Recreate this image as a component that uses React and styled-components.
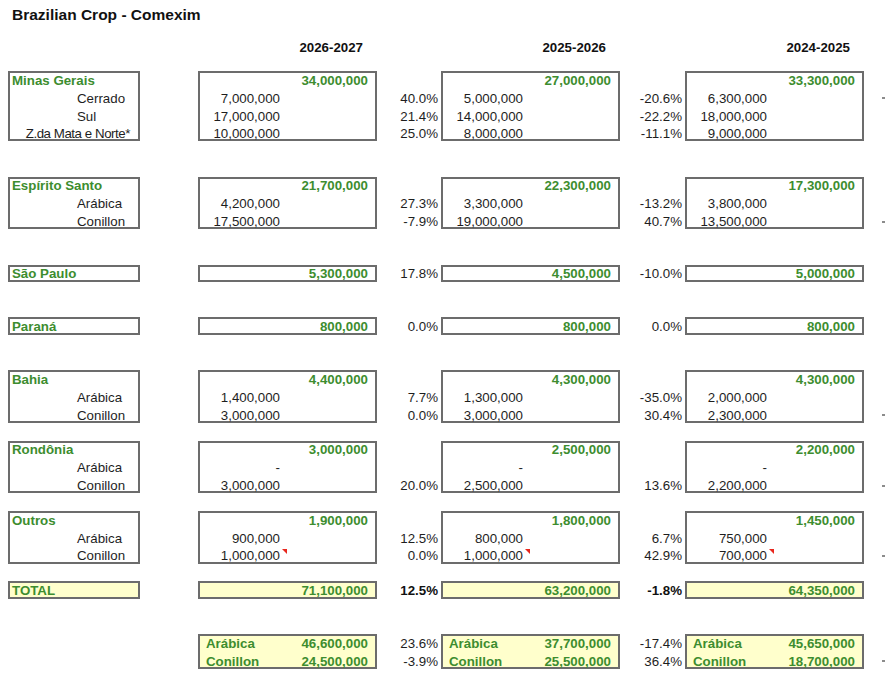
import React from "react";
import styled, { createGlobalStyle, css } from "styled-components";

const R = 17.6; // spreadsheet row height (block spacing)
const P = 17.8; // text row pitch inside a block

const GlobalStyle = createGlobalStyle`
  body {
    margin: 0;
    background: #ffffff;
    font-family: "Liberation Sans", Arial, sans-serif;
    font-size: 13.3px;
    color: #1e1e1e;
  }
`;

const blocks = [
  {
    name: "Minas Gerais",
    gap: 0,
    totals: ["34,000,000", "27,000,000", "33,300,000"],
    subs: [
      { label: "Cerrado", vals: ["7,000,000", "5,000,000", "6,300,000"], pcts: ["40.0%", "-20.6%"], dot: true },
      { label: "Sul", vals: ["17,000,000", "14,000,000", "18,000,000"], pcts: ["21.4%", "-22.2%"] },
      { label: "Z.da Mata e Norte*", wide: true, vals: ["10,000,000", "8,000,000", "9,000,000"], pcts: ["25.0%", "-11.1%"] },
    ],
  },
  {
    name: "Espírito Santo",
    gap: 2,
    totals: ["21,700,000", "22,300,000", "17,300,000"],
    subs: [
      { label: "Arábica", vals: ["4,200,000", "3,300,000", "3,800,000"], pcts: ["27.3%", "-13.2%"] },
      { label: "Conillon", vals: ["17,500,000", "19,000,000", "13,500,000"], pcts: ["-7.9%", "40.7%"], dot: true },
    ],
  },
  { name: "São Paulo", gap: 2, totals: ["5,300,000", "4,500,000", "5,000,000"], topPcts: ["17.8%", "-10.0%"], subs: [] },
  { name: "Paraná", gap: 2, totals: ["800,000", "800,000", "800,000"], topPcts: ["0.0%", "0.0%"], subs: [] },
  {
    name: "Bahia",
    gap: 2,
    totals: ["4,400,000", "4,300,000", "4,300,000"],
    subs: [
      { label: "Arábica", vals: ["1,400,000", "1,300,000", "2,000,000"], pcts: ["7.7%", "-35.0%"] },
      { label: "Conillon", vals: ["3,000,000", "3,000,000", "2,300,000"], pcts: ["0.0%", "30.4%"], dot: true },
    ],
  },
  {
    name: "Rondônia",
    gap: 1,
    totals: ["3,000,000", "2,500,000", "2,200,000"],
    subs: [
      { label: "Arábica", vals: ["-", "-", "-"], pcts: ["", ""] },
      { label: "Conillon", vals: ["3,000,000", "2,500,000", "2,200,000"], pcts: ["20.0%", "13.6%"], dot: true },
    ],
  },
  {
    name: "Outros",
    gap: 1,
    totals: ["1,900,000", "1,800,000", "1,450,000"],
    subs: [
      { label: "Arábica", vals: ["900,000", "800,000", "750,000"], pcts: ["12.5%", "6.7%"] },
      { label: "Conillon", vals: ["1,000,000", "1,000,000", "700,000"], pcts: ["0.0%", "42.9%"], dot: true, note: true },
    ],
  },
];

const total = { totals: ["71,100,000", "63,200,000", "64,350,000"], pcts: ["12.5%", "-1.8%"] };

const split = [
  { arabica: "46,600,000", conillon: "24,500,000" },
  { arabica: "37,700,000", conillon: "25,500,000" },
  { arabica: "45,650,000", conillon: "18,700,000" },
];
const splitPcts = [
  ["23.6%", "-3.9%"],
  ["-17.4%", "36.4%"],
];

export default function App() {
  return (
    <Page>
      <GlobalStyle />
      <Title>Brazilian Crop - Comexim</Title>

      <HeaderRow>
        <LabelSpacer />
        <HeadCell>2026-2027</HeadCell>
        <HeadGap $w={64} />
        <HeadCell>2025-2026</HeadCell>
        <HeadGap $w={65} />
        <HeadCell>2024-2025</HeadCell>
      </HeaderRow>

      {blocks.map((b) => {
        const rows = 1 + b.subs.length;
        return (
          <Block key={b.name} $gap={b.gap} $rows={rows}>
            <LabelBox $rows={rows}>
              <RegionName>{b.name}</RegionName>
              {b.subs.map((s) => (
                <SubLabel key={s.label} $wide={s.wide}>{s.label}</SubLabel>
              ))}
            </LabelBox>
            {[0, 1, 2].map((c) => (
              <React.Fragment key={c}>
                <ValBox $rows={rows}>
                  <TotalCell>{b.totals[c]}</TotalCell>
                  {b.subs.map((s) => (
                    <SubVal key={s.label}>
                      {s.vals[c]}
                      {s.note && <NoteMark />}
                    </SubVal>
                  ))}
                </ValBox>
                {c < 2 && (
                  <PctCol $rows={rows} $w={c === 0 ? 64 : 65}>
                    <Pct>{b.topPcts ? b.topPcts[c] : ""}</Pct>
                    {b.subs.map((s) => (
                      <Pct key={s.label}>{s.pcts[c]}</Pct>
                    ))}
                  </PctCol>
                )}
              </React.Fragment>
            ))}
            <DotCol $rows={rows}>
              <DotCell />
              {b.subs.map((s) => (
                <DotCell key={s.label}>{s.dot && <Dot />}</DotCell>
              ))}
            </DotCol>
          </Block>
        );
      })}

      <Block $gap={1} $rows={1}>
        <LabelBox $rows={1} $fill>
          <RegionName>TOTAL</RegionName>
        </LabelBox>
        {total.totals.map((t, c) => (
          <React.Fragment key={c}>
            <ValBox $rows={1} $fill>
              <TotalCell>{t}</TotalCell>
            </ValBox>
            {c < 2 && (
              <PctCol $rows={1} $w={c === 0 ? 64 : 65}>
                <Pct $bold>{total.pcts[c]}</Pct>
              </PctCol>
            )}
          </React.Fragment>
        ))}
      </Block>

      <Block $gap={2} $rows={2}>
        <LabelSpacer />
        {split.map((s, c) => (
          <React.Fragment key={c}>
            <ValBox $rows={2} $fill>
              <SplitRow>
                <span>Arábica</span>
                <span>{s.arabica}</span>
              </SplitRow>
              <SplitRow>
                <span>Conillon</span>
                <span>{s.conillon}</span>
              </SplitRow>
            </ValBox>
            {c < 2 && (
              <PctCol $rows={2} $w={c === 0 ? 64 : 65}>
                <Pct>{splitPcts[c][0]}</Pct>
                <Pct>{splitPcts[c][1]}</Pct>
              </PctCol>
            )}
          </React.Fragment>
        ))}
        <DotCol $rows={2}>
          <DotCell />
          <DotCell>
            <Dot />
          </DotCell>
        </DotCol>
      </Block>
    </Page>
  );
}

// shared row grid: every column of a block uses the same text pitch
const rowGrid = css`
  display: grid;
  grid-template-rows: repeat(${(p) => p.$rows}, ${P}px);
  align-content: start;
`;

// text sits a little high in each row, like the sheet's cells
const cell = css`
  display: flex;
  align-items: center;
  padding-bottom: 3px;
  box-sizing: border-box;
`;

const Page = styled.div`
  width: 886px;
  height: 693px;
  box-sizing: border-box;
  padding-left: 8px;
  overflow: hidden;
`;

const Title = styled.h1`
  margin: 6px 0 0 4px;
  font-size: 15.5px;
  line-height: 18px;
  font-weight: bold;
  color: #111;
`;

const HeaderRow = styled.div`
  display: flex;
  height: 18px;
  margin-top: 14px;
  margin-bottom: 15px;
  align-items: center;
`;

const LabelSpacer = styled.div`
  width: 190px;
  flex: none;
`;

const HeadCell = styled.div`
  width: 179px;
  box-sizing: border-box;
  padding-right: 14px;
  text-align: right;
  font-weight: bold;
  color: #111;
`;

const HeadGap = styled.div`
  width: ${(p) => p.$w}px;
  flex: none;
`;

const Block = styled.div`
  display: flex;
  margin-top: ${(p) => p.$gap * R}px;
  height: ${(p) => p.$rows * R}px;
`;

const Box = styled.div`
  ${rowGrid};
  box-sizing: border-box;
  height: 100%;
  flex: none;
  border: 2px solid #6c6c6c;
  background: ${(p) => (p.$fill ? "#ffffcc" : "#ffffff")};
`;

const LabelBox = styled(Box)`
  width: 132px;
  margin-right: 58px;
`;

const ValBox = styled(Box)`
  width: 179px;
`;

const RegionName = styled.div`
  ${cell};
  padding-left: 2px;
  font-weight: bold;
  color: #3d8d2f;
  white-space: nowrap;
`;

const SubLabel = styled.div`
  ${cell};
  justify-content: ${(p) => (p.$wide ? "flex-end" : "flex-start")};
  padding-left: ${(p) => (p.$wide ? 0 : 67)}px;
  padding-right: ${(p) => (p.$wide ? 8 : 0)}px;
  letter-spacing: ${(p) => (p.$wide ? "-0.45px" : "normal")};
  white-space: nowrap;
`;

const TotalCell = styled.div`
  ${cell};
  justify-content: flex-end;
  padding-right: 7px;
  font-weight: bold;
  color: #3d8d2f;
`;

const SubVal = styled.div`
  ${cell};
  position: relative;
  width: 88px;
  padding-right: 8px;
  justify-content: flex-end;
`;

const NoteMark = styled.span`
  position: absolute;
  top: 0;
  right: 1px;
  width: 0;
  height: 0;
  border-top: 5px solid #e8271d;
  border-left: 5px solid transparent;
`;

const PctCol = styled.div`
  ${rowGrid};
  width: ${(p) => p.$w}px;
  flex: none;
  padding-top: 2px;
`;

const Pct = styled.div`
  ${cell};
  justify-content: flex-end;
  padding-right: 3px;
  font-weight: ${(p) => (p.$bold ? "bold" : "normal")};
  color: ${(p) => (p.$bold ? "#111" : "#1e1e1e")};
`;

const SplitRow = styled.div`
  ${cell};
  justify-content: space-between;
  padding-left: 6px;
  padding-right: 7px;
  font-weight: bold;
  color: #3d8d2f;
`;

const DotCol = styled.div`
  ${rowGrid};
  width: 22px;
  flex: none;
  padding-top: 2px;
`;

const DotCell = styled.div`
  ${cell};
  padding-left: 18px;
`;

const Dot = styled.span`
  display: block;
  width: 3px;
  height: 2px;
  background: #8c8c8c;
`;
